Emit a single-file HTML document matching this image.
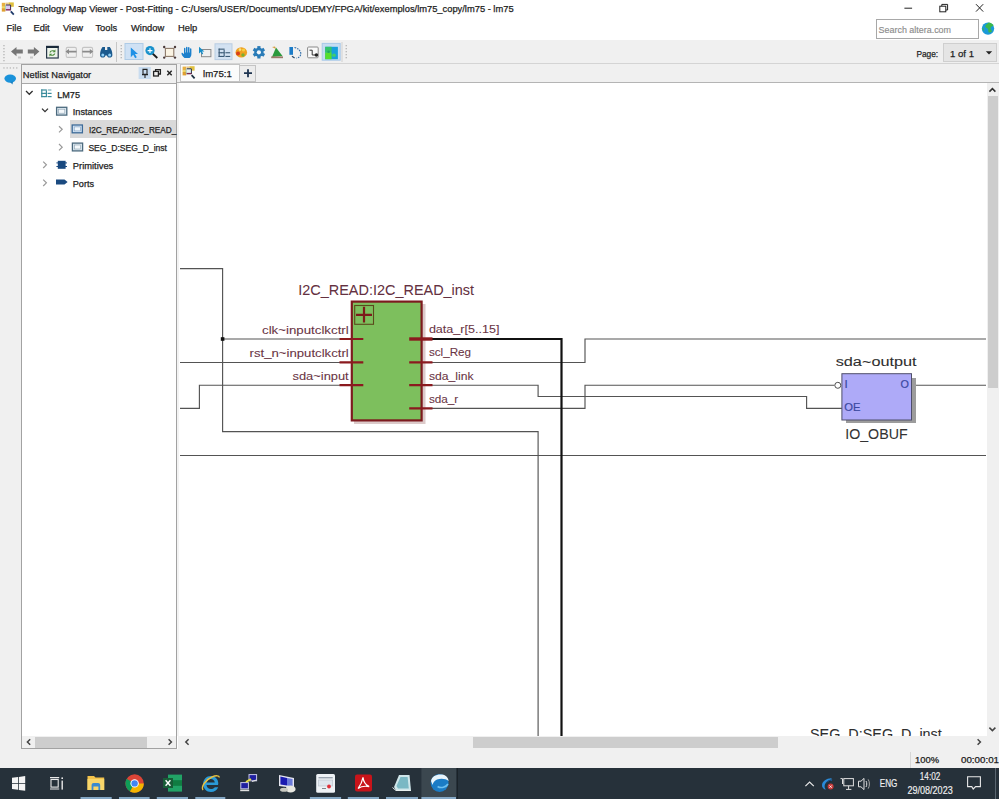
<!DOCTYPE html>
<html><head><meta charset="utf-8">
<style>
*{box-sizing:border-box}
html,body{margin:0;padding:0}
body{width:999px;height:799px;overflow:hidden;position:relative;background:#fff;font-family:"Liberation Sans",sans-serif;color:#000}
.a{position:absolute}
.t{position:absolute;white-space:pre;line-height:1;-webkit-text-stroke:0.25px currentColor}
svg{position:absolute;left:0;top:0}
</style></head><body>
<div class="a" style="left:0;top:0;width:999px;height:40px;background:#fff"></div>
<div class="a" style="left:178px;top:83px;width:809px;height:653px;background:#fff"></div>
<svg width="999" height="799" viewBox="0 0 999 799">
<g fill="none" stroke="#545454" stroke-width="1.15">
<path d="M180 268.6H222.6V431.6H538.1V736"/>
<path d="M222.6 339H341"/>
<path d="M180 362.5H341"/>
<path d="M180 408.3H199.4V385.2H341"/>
<path d="M432 362.5H585V339H986"/>
<path d="M432 385.2H538.1V396.5H806.6V408.3H842"/>
<path d="M432 408.3H585V385.2H834.5"/>
<path d="M912 385.2H986"/>
<path d="M180 455.5H986"/>
</g>
<path d="M432 339H561.5V736" fill="none" stroke="#111" stroke-width="2.2"/>
<rect x="220.8" y="337.2" width="3.6" height="3.6" fill="#111"/>
<rect x="354" y="304" width="71.5" height="120" fill="#dccaca"/>
<rect x="351.8" y="301.6" width="69.8" height="118.8" fill="#7dbf5d" stroke="#7d1a1f" stroke-width="2.2"/>
<rect x="354.7" y="305.5" width="18.8" height="18.8" fill="none" stroke="#5b4a1c" stroke-width="1.1"/>
<path d="M356 314.9H372M364 306.8V322.6" stroke="#7d1a1a" stroke-width="2.2"/>
<g stroke="#8b1a1f" stroke-width="2.2">
<path d="M339.5 339H363.3M339.5 362.3H363.3M339.5 385.2H363.3"/>
<path d="M409.2 362.3H432.5M409.2 385.2H432.5M409.2 408.3H432.5"/>
</g>
<path d="M409.2 339H432.5" stroke="#8b1a1f" stroke-width="3.4"/>
<rect x="846" y="378" width="70" height="45" fill="#9c9c9c"/>
<rect x="841.9" y="373.7" width="69.6" height="46.3" fill="#aeaaf8" stroke="#4f4f6a" stroke-width="1"/>
<circle cx="837.8" cy="385.3" r="3" fill="#fff" stroke="#505050" stroke-width="1"/>
</svg>
<svg class="a" width="999" height="799" style="left:0;top:0"><text x="298.30" y="294.80" font-family="Liberation Sans" font-size="15.36" font-weight="normal" fill="#643040" stroke="#643040" stroke-width="0.05" textLength="175.80" lengthAdjust="spacingAndGlyphs" style="white-space:pre">I2C_READ:I2C_READ_inst</text></svg>
<svg class="a" width="999" height="799" style="left:0;top:0"><text x="262.00" y="333.50" font-family="Liberation Sans" font-size="11.80" font-weight="normal" fill="#6a3444" stroke="#6a3444" stroke-width="0.08" textLength="86.70" lengthAdjust="spacingAndGlyphs" style="white-space:pre">clk~inputclkctrl</text></svg>
<svg class="a" width="999" height="799" style="left:0;top:0"><text x="249.60" y="356.60" font-family="Liberation Sans" font-size="11.80" font-weight="normal" fill="#6a3444" stroke="#6a3444" stroke-width="0.08" textLength="99.10" lengthAdjust="spacingAndGlyphs" style="white-space:pre">rst_n~inputclkctrl</text></svg>
<svg class="a" width="999" height="799" style="left:0;top:0"><text x="292.50" y="380.00" font-family="Liberation Sans" font-size="11.80" font-weight="normal" fill="#6a3444" stroke="#6a3444" stroke-width="0.08" textLength="56.20" lengthAdjust="spacingAndGlyphs" style="white-space:pre">sda~input</text></svg>
<svg class="a" width="999" height="799" style="left:0;top:0"><text x="428.90" y="333.30" font-family="Liberation Sans" font-size="11.80" font-weight="normal" fill="#6a3444" stroke="#6a3444" stroke-width="0.08" textLength="70.50" lengthAdjust="spacingAndGlyphs" style="white-space:pre">data_r[5..15]</text></svg>
<svg class="a" width="999" height="799" style="left:0;top:0"><text x="428.90" y="356.30" font-family="Liberation Sans" font-size="11.80" font-weight="normal" fill="#6a3444" stroke="#6a3444" stroke-width="0.08" textLength="42.20" lengthAdjust="spacingAndGlyphs" style="white-space:pre">scl_Reg</text></svg>
<svg class="a" width="999" height="799" style="left:0;top:0"><text x="428.90" y="380.40" font-family="Liberation Sans" font-size="11.80" font-weight="normal" fill="#6a3444" stroke="#6a3444" stroke-width="0.08" textLength="44.60" lengthAdjust="spacingAndGlyphs" style="white-space:pre">sda_link</text></svg>
<svg class="a" width="999" height="799" style="left:0;top:0"><text x="428.90" y="403.20" font-family="Liberation Sans" font-size="11.80" font-weight="normal" fill="#6a3444" stroke="#6a3444" stroke-width="0.08" textLength="29.40" lengthAdjust="spacingAndGlyphs" style="white-space:pre">sda_r</text></svg>
<svg class="a" width="999" height="799" style="left:0;top:0"><text x="835.70" y="366.00" font-family="Liberation Sans" font-size="12.62" font-weight="normal" fill="#2e2e2e" stroke="#2e2e2e" stroke-width="0.08" textLength="80.90" lengthAdjust="spacingAndGlyphs" style="white-space:pre">sda~output</text></svg>
<svg class="a" width="999" height="799" style="left:0;top:0"><text x="845.20" y="438.60" font-family="Liberation Sans" font-size="14.68" font-weight="normal" fill="#333" stroke="#333" stroke-width="0.08" textLength="62.40" lengthAdjust="spacingAndGlyphs" style="white-space:pre">IO_OBUF</text></svg>
<svg class="a" width="999" height="799" style="left:0;top:0"><text x="844.40" y="387.60" font-family="Liberation Sans" font-size="11.60" font-weight="normal" fill="#3a48a0" stroke="#3a48a0" stroke-width="0.2" style="white-space:pre">I</text></svg>
<svg class="a" width="999" height="799" style="left:0;top:0"><text x="900.60" y="387.60" font-family="Liberation Sans" font-size="11.60" font-weight="normal" fill="#3a48a0" stroke="#3a48a0" stroke-width="0.2" textLength="8.40" lengthAdjust="spacingAndGlyphs" style="white-space:pre">O</text></svg>
<svg class="a" width="999" height="799" style="left:0;top:0"><text x="844.20" y="410.80" font-family="Liberation Sans" font-size="11.60" font-weight="normal" fill="#3a48a0" stroke="#3a48a0" stroke-width="0.2" textLength="16.20" lengthAdjust="spacingAndGlyphs" style="white-space:pre">OE</text></svg>
<svg class="a" width="999" height="799" style="left:0;top:0"><text x="810.00" y="738.50" font-family="Liberation Sans" font-size="15.50" font-weight="normal" fill="#2e2e2e" stroke="#2e2e2e" stroke-width="0.08" textLength="131.80" lengthAdjust="spacingAndGlyphs" style="white-space:pre">SEG_D:SEG_D_inst</text></svg>
<div class="a" style="left:0;top:40px;width:999px;height:23px;background:#f0f0f0"></div>
<div class="a" style="left:0;top:63px;width:999px;height:1px;background:#d4d4d4"></div>
<div class="a" style="left:0;top:64px;width:21px;height:704px;background:#f0f0f0"></div>
<div class="a" style="left:21px;top:64px;width:156px;height:685px;background:#fff;border:1px solid #a2a2a2"></div>
<div class="a" style="left:22px;top:65px;width:154px;height:19px;background:#f0f0f0;border-bottom:1px solid #a8a8a8"></div>
<div class="a" style="left:177px;top:64px;width:822px;height:19px;background:#f0f0f0;border-bottom:1px solid #b4b4b4"></div>
<div class="a" style="left:177px;top:83px;width:2px;height:653px;background:#f3f3f3"></div>
<div class="a" style="left:180px;top:64px;width:60px;height:18px;background:#fbfbfb;border:1px solid #c4c4c4"></div>
<div class="a" style="left:239px;top:65px;width:17px;height:17px;background:#ececec;border:1px solid #c4c4c4"></div>
<div class="a" style="left:987px;top:83px;width:12px;height:653px;background:#f0f0f0"></div>
<div class="a" style="left:988px;top:96px;width:10px;height:292px;background:#cdcdcd"></div>
<div class="a" style="left:178px;top:736px;width:821px;height:13px;background:#f0f0f0"></div>
<div class="a" style="left:473px;top:737px;width:305px;height:11px;background:#cdcdcd"></div>
<div class="a" style="left:22px;top:736px;width:154px;height:12px;background:#f0f0f0"></div>
<div class="a" style="left:35px;top:737px;width:112px;height:11px;background:#cdcdcd"></div>
<div class="a" style="left:0;top:749px;width:999px;height:19px;background:#f0f0f0"></div>
<div class="a" style="left:910px;top:752px;width:1px;height:16px;background:#d6d6d6"></div>
<div class="a" style="left:0;top:768px;width:999px;height:31px;background:#26313a"></div>
<div class="a" style="left:876px;top:19px;width:103px;height:20px;border:1px solid #a8a8a8;background:#fff"></div>
<div class="a" style="left:943px;top:43px;width:54px;height:19px;background:#e5e5e5;border:1px solid #cfcfcf"></div>
<svg width="999" height="799" viewBox="0 0 999 799">
<g fill="#b4b4b4">
<rect x="3.3" y="45" width="1.3" height="1.3"/><rect x="3.3" y="48" width="1.3" height="1.3"/><rect x="3.3" y="51" width="1.3" height="1.3"/><rect x="3.3" y="54" width="1.3" height="1.3"/><rect x="3.3" y="57" width="1.3" height="1.3"/><rect x="3.3" y="60" width="1.3" height="1.3"/>
<rect x="120.6" y="45" width="1.3" height="1.3"/><rect x="120.6" y="48" width="1.3" height="1.3"/><rect x="120.6" y="51" width="1.3" height="1.3"/><rect x="120.6" y="54" width="1.3" height="1.3"/><rect x="120.6" y="57" width="1.3" height="1.3"/>
<rect x="345.6" y="45" width="1.3" height="1.3"/><rect x="345.6" y="48" width="1.3" height="1.3"/><rect x="345.6" y="51" width="1.3" height="1.3"/><rect x="345.6" y="54" width="1.3" height="1.3"/><rect x="345.6" y="57" width="1.3" height="1.3"/>
</g>
<rect x="116" y="42" width="1" height="20" fill="#c6c6c6"/>
<rect x="341.5" y="42" width="1" height="20" fill="#d0d0d0"/>
<!-- back / forward -->
<path d="M11 51.5L16.5 47V49.6H22.8V53.6H16.5V56.2Z" fill="#767676"/>
<path d="M39.4 51.5L33.9 47V49.6H27.8V53.6H33.9V56.2Z" fill="#767676"/>
<rect x="18" y="56.5" width="3" height="2" fill="#c8c8c8"/><rect x="30" y="56.5" width="3" height="2" fill="#c8c8c8"/>
<!-- refresh window -->
<rect x="46.6" y="46.4" width="11.6" height="11.6" fill="#eef4ec" stroke="#28384a" stroke-width="1.2"/>
<rect x="46.2" y="46" width="12.4" height="2" fill="#1a2a3a"/>
<path d="M49.5 52.5C50 50.3 52.5 49.6 54.3 50.6L55.4 49.6V52.3H52.7L53.6 51.5C52.3 51 51 51.6 50.7 52.5Z M55.3 53.5C54.8 55.6 52.3 56.4 50.5 55.4L49.4 56.4V53.7H52.1L51.2 54.5C52.5 55.1 53.8 54.4 54.1 53.5Z" fill="#4a8a3a"/>
<!-- back/fwd in box -->
<rect x="66.2" y="47.4" width="10.2" height="10" rx="1.5" fill="none" stroke="#c4c4c4" stroke-width="1.1"/>
<path d="M65.5 51.6L69 49V50.8H76.5V52.4H69V54.2Z" fill="#8a8a8a"/>
<rect x="82.4" y="47.4" width="10.2" height="10" rx="1.5" fill="none" stroke="#c4c4c4" stroke-width="1.1"/>
<path d="M93.3 51.6L89.8 49V50.8H82.3V52.4H89.8V54.2Z" fill="#8a8a8a"/>
<!-- binoculars -->
<path d="M100 55C100 51 101.5 48.5 102.5 47H105V50H107.3V47H109.8C110.8 48.5 112.4 51 112.4 55C112.4 57 111 57.6 109.6 57.6C108 57.6 107.2 56.6 107 55.5H105.4C105.2 56.6 104.4 57.6 102.8 57.6C101.4 57.6 100 57 100 55Z" fill="#1b5a8e"/>
<circle cx="102.8" cy="55" r="1.5" fill="#8fd0f8"/><circle cx="109.6" cy="55" r="1.5" fill="#8fd0f8"/>
<!-- selected pointer -->
<rect x="125" y="43.5" width="18" height="16" fill="#cfe1f4" stroke="#aecbe6" stroke-width="1"/>
<path d="M130.8 47.4V57.2L133.2 54.8L135.2 58.2L136.8 57.3L134.9 54H138Z" fill="#1e90e6"/>
<!-- zoom -->
<path d="M152.5 53.5L157.3 58" stroke="#1a1a1a" stroke-width="1.8"/>
<circle cx="150" cy="50.6" r="4.6" fill="#1a92cc"/>
<path d="M147.6 50.6H152.4M150 48.2V53" stroke="#fff" stroke-width="1.1"/>
<!-- fit -->
<rect x="165.4" y="48.4" width="8.4" height="8" fill="#fbf4e4" stroke="#8c7868" stroke-width="1.1"/>
<g fill="#4a3a3a"><circle cx="164.2" cy="47" r="1.2"/><circle cx="175" cy="47" r="1.2"/><circle cx="164.2" cy="57.6" r="1.2"/><circle cx="175" cy="57.6" r="1.2"/></g>
<!-- hand -->
<path d="M184.5 58C182.6 56.4 181.3 54.4 181.5 53.2C181.8 52.4 182.7 52.6 183.3 53.4L184 54.2V48.6C184 47.6 185.4 47.6 185.4 48.6V52.4H186V47.4C186 46.4 187.5 46.4 187.5 47.4V52.4H188V47.8C188 46.8 189.5 46.8 189.5 47.8V52.6H190V49C190 48 191.4 48 191.4 49V54C191.4 56 190.4 57.4 189.5 58Z" fill="#1c80cc"/>
<!-- select region -->
<rect x="201.5" y="49.5" width="9.4" height="7.2" fill="none" stroke="#8a8a8a" stroke-width="1"/>
<path d="M199 46.8V53.6L200.7 52L202 54.4L203.2 53.8L202 51.4H204.4Z" fill="#1a8ec8"/>
<!-- hierarchy selected -->
<rect x="215" y="43.8" width="17" height="15.8" fill="#d3e2f2" stroke="#b8cde2" stroke-width="1"/>
<g fill="#3b5a76">
<rect x="218.6" y="48.6" width="1.1" height="8.4"/><rect x="218.6" y="48.6" width="6" height="1.1"/><rect x="218.6" y="52.2" width="3.4" height="1.1"/><rect x="218.6" y="55.9" width="3.4" height="1.1"/>
<rect x="223.6" y="49.8" width="1.1" height="6.2"/><rect x="225.4" y="52.2" width="4.8" height="1.1"/><rect x="225.4" y="55.9" width="4.8" height="1.1"/><rect x="221.5" y="52.2" width="3" height="1.1"/><rect x="221.5" y="55.9" width="3" height="1.1"/>
</g>
<!-- palette -->
<ellipse cx="241.3" cy="52.4" rx="5.8" ry="5.2" fill="#f0a020"/>
<circle cx="238" cy="53.6" r="2" fill="#d8401a"/><circle cx="243.5" cy="50" r="1.6" fill="#f6d040"/><circle cx="243" cy="55" r="1.7" fill="#7ab030"/><circle cx="240" cy="49.6" r="1.3" fill="#f8e080"/>
<!-- gear -->
<g transform="translate(258.9 52.3)">
<circle r="4.6" fill="#2a7cb8"/>
<g fill="#2a7cb8"><rect x="-1.6" y="-6.2" width="3.2" height="12.4"/><rect x="-1.6" y="-6.2" width="3.2" height="12.4" transform="rotate(60)"/><rect x="-1.6" y="-6.2" width="3.2" height="12.4" transform="rotate(120)"/></g>
<circle r="2.1" fill="#f4f8fc"/>
</g>
<!-- green triangle -->
<path d="M272 57L276 47.5L282.5 56Z" fill="#2c9a3c"/>
<path d="M272 47L275 46.5L276 49Z" fill="#d8a040"/>
<rect x="271.2" y="56.4" width="11.8" height="1.8" fill="#9a7a6a"/>
<!-- blue figure -->
<rect x="289.4" y="47" width="3.6" height="7.8" fill="#1c7cc8"/>
<path d="M294.5 47.5C298.5 48.5 300.8 51 300.8 53.8C300.8 56 299 57.6 296.5 58.2" fill="none" stroke="#2a6aa8" stroke-width="1.2" stroke-dasharray="1.6 1"/>
<path d="M292 56.2L294.6 58" stroke="#2a4a6a" stroke-width="1.2"/>
<!-- box with arrow -->
<rect x="307.6" y="47" width="10.6" height="10.8" rx="1" fill="#fafafa" stroke="#8a8a8a" stroke-width="1"/>
<path d="M309.5 50.2H312.2V55H315" fill="none" stroke="#333" stroke-width="1"/>
<circle cx="316.4" cy="55" r="1.8" fill="#222"/>
<!-- grid selected -->
<rect x="322.2" y="43.4" width="18" height="16.8" fill="#c6ddf2" stroke="#a9c9e8" stroke-width="1"/>
<rect x="325.2" y="46.8" width="12.7" height="12.4" fill="#18a0dc"/>
<rect x="325.2" y="46.8" width="6.4" height="5.6" fill="#34c46a"/>
<rect x="325.2" y="52.4" width="6.4" height="6.8" fill="#56de2e"/>
<circle cx="334" cy="55.2" r="1.8" fill="#40cc70"/>
<circle cx="328.6" cy="51.8" r="1.3" fill="#20a860"/>
</svg>
<svg class="a" width="999" height="799" style="left:0;top:0"><text x="18.60" y="12.00" font-family="Liberation Sans" font-size="9.88" font-weight="normal" fill="#1e1e1e" stroke="#1e1e1e" stroke-width="0.25" textLength="495.00" lengthAdjust="spacingAndGlyphs" style="white-space:pre">Technology Map Viewer - Post-Fitting - C:/Users/USER/Documents/UDEMY/FPGA/kit/exemplos/lm75_copy/lm75 - lm75</text></svg>
<svg class="a" width="999" height="799" style="left:0;top:0"><text x="6.60" y="31.00" font-family="Liberation Sans" font-size="9.33" font-weight="normal" fill="#1e1e1e" stroke="#1e1e1e" stroke-width="0.25" style="white-space:pre">File</text></svg>
<svg class="a" width="999" height="799" style="left:0;top:0"><text x="33.60" y="31.00" font-family="Liberation Sans" font-size="9.33" font-weight="normal" fill="#1e1e1e" stroke="#1e1e1e" stroke-width="0.25" style="white-space:pre">Edit</text></svg>
<svg class="a" width="999" height="799" style="left:0;top:0"><text x="63.00" y="31.00" font-family="Liberation Sans" font-size="9.33" font-weight="normal" fill="#1e1e1e" stroke="#1e1e1e" stroke-width="0.25" style="white-space:pre">View</text></svg>
<svg class="a" width="999" height="799" style="left:0;top:0"><text x="95.40" y="31.00" font-family="Liberation Sans" font-size="9.33" font-weight="normal" fill="#1e1e1e" stroke="#1e1e1e" stroke-width="0.25" style="white-space:pre">Tools</text></svg>
<svg class="a" width="999" height="799" style="left:0;top:0"><text x="131.00" y="31.00" font-family="Liberation Sans" font-size="9.33" font-weight="normal" fill="#1e1e1e" stroke="#1e1e1e" stroke-width="0.25" style="white-space:pre">Window</text></svg>
<svg class="a" width="999" height="799" style="left:0;top:0"><text x="178.00" y="31.00" font-family="Liberation Sans" font-size="9.33" font-weight="normal" fill="#1e1e1e" stroke="#1e1e1e" stroke-width="0.25" style="white-space:pre">Help</text></svg>
<svg class="a" width="999" height="799" style="left:0;top:0"><text x="878.60" y="33.40" font-family="Liberation Sans" font-size="9.05" font-weight="normal" fill="#8c8c8c" stroke="#8c8c8c" stroke-width="0.15" textLength="72.40" lengthAdjust="spacingAndGlyphs" style="white-space:pre">Search altera.com</text></svg>
<svg class="a" width="999" height="799" style="left:0;top:0"><text x="916.40" y="56.70" font-family="Liberation Sans" font-size="9.60" font-weight="normal" fill="#1e1e1e" stroke="#1e1e1e" stroke-width="0.25" textLength="21.80" lengthAdjust="spacingAndGlyphs" style="white-space:pre">Page:</text></svg>
<svg class="a" width="999" height="799" style="left:0;top:0"><text x="950.00" y="56.70" font-family="Liberation Sans" font-size="9.60" font-weight="normal" fill="#1e1e1e" stroke="#1e1e1e" stroke-width="0.25" style="white-space:pre">1 of 1</text></svg>
<svg class="a" width="999" height="799" style="left:0;top:0"><text x="22.80" y="78.00" font-family="Liberation Sans" font-size="9.33" font-weight="normal" fill="#1e1e1e" stroke="#1e1e1e" stroke-width="0.25" style="white-space:pre">Netlist Navigator</text></svg>
<svg class="a" width="999" height="799" style="left:0;top:0"><text x="203.00" y="77.00" font-family="Liberation Sans" font-size="9.05" font-weight="normal" fill="#1e1e1e" stroke="#1e1e1e" stroke-width="0.25" textLength="28.80" lengthAdjust="spacingAndGlyphs" style="white-space:pre">lm75:1</text></svg>
<svg class="a" width="999" height="799" style="left:0;top:0"><text x="915.00" y="762.60" font-family="Liberation Sans" font-size="8.64" font-weight="normal" fill="#1e1e1e" stroke="#1e1e1e" stroke-width="0.25" textLength="24.00" lengthAdjust="spacingAndGlyphs" style="white-space:pre">100%</text></svg>
<svg class="a" width="999" height="799" style="left:0;top:0"><text x="961.00" y="762.60" font-family="Liberation Sans" font-size="8.64" font-weight="normal" fill="#1e1e1e" stroke="#1e1e1e" stroke-width="0.25" textLength="38.00" lengthAdjust="spacingAndGlyphs" style="white-space:pre">00:00:01</text></svg>
<div class="a" style="left:70px;top:120px;width:106px;height:17.5px;background:#d9d9d9"></div>
<svg width="999" height="799" viewBox="0 0 999 799">
<g fill="none" stroke="#303030" stroke-width="1.3">
<path d="M26 91L29.3 94.3L32.6 91"/>
<path d="M42 108.6L45 111.6L48 108.6"/>
</g>
<g fill="none" stroke="#9a9a9a" stroke-width="1.2">
<path d="M59 126.2L62.2 129.3L59 132.4"/>
<path d="M59 144L62.2 147.2L59 150.4"/>
<path d="M43.2 161.6L46.4 164.8L43.2 168"/>
<path d="M43.2 179.6L46.4 182.8L43.2 186"/>
</g>
<!-- LM75 icon -->
<g fill="#3a8c9c">
<rect x="41.2" y="89.4" width="1.2" height="7.8"/><rect x="41.2" y="89.4" width="5.6" height="1.2"/><rect x="41.2" y="92.8" width="3.2" height="1.2"/><rect x="41.2" y="96" width="3.2" height="1.2"/>
<rect x="45.8" y="90.4" width="1.2" height="5.8"/><rect x="47.6" y="92.8" width="4" height="1.2"/><rect x="47.6" y="96" width="4" height="1.2"/><rect x="44" y="92.8" width="3" height="1.2"/><rect x="44" y="96" width="3" height="1.2"/>
<rect x="47.8" y="89.4" width="3.6" height="1.2" fill="#7ab0bc"/>
</g>
<!-- instance icons -->
<rect x="56.6" y="107.3" width="10.2" height="7.8" fill="#dde8f0" stroke="#4c6a7e" stroke-width="1.3"/>
<rect x="58.6" y="109.2" width="6.2" height="4" fill="#f4f8fb" stroke="#8aa0b0" stroke-width="0.6"/>
<rect x="72.2" y="125" width="10.2" height="7.8" fill="#d4e4f2" stroke="#3c6a98" stroke-width="1.3"/>
<rect x="74.2" y="126.9" width="6.2" height="4" fill="#eef5fb" stroke="#7a9cc0" stroke-width="0.6"/>
<rect x="72.4" y="143.1" width="10.2" height="7.8" fill="#dde8f0" stroke="#4c6a7e" stroke-width="1.3"/>
<rect x="74.4" y="145" width="6.2" height="4" fill="#f4f8fb" stroke="#8aa0b0" stroke-width="0.6"/>
<!-- primitives -->
<rect x="57.8" y="160.8" width="7.8" height="8" fill="#1a4a80"/>
<g fill="#1a4a80"><rect x="56.4" y="162.4" width="10.6" height="1"/><rect x="56.4" y="166" width="10.6" height="1"/></g>
<!-- ports -->
<path d="M56 179.5H64.5L67.6 182L64.5 184.6H56Z" fill="#1a4a80"/>
</svg>
<svg class="a" width="999" height="799" style="left:0;top:0"><text x="57.20" y="97.60" font-family="Liberation Sans" font-size="8.78" font-weight="normal" fill="#1e1e1e" stroke="#1e1e1e" stroke-width="0.25" textLength="22.80" lengthAdjust="spacingAndGlyphs" style="white-space:pre">LM75</text></svg>
<svg class="a" width="999" height="799" style="left:0;top:0"><text x="72.80" y="115.00" font-family="Liberation Sans" font-size="8.78" font-weight="normal" fill="#1e1e1e" stroke="#1e1e1e" stroke-width="0.25" textLength="39.20" lengthAdjust="spacingAndGlyphs" style="white-space:pre">Instances</text></svg>
<svg class="a" width="999" height="799" style="left:0;top:0"><text x="88.90" y="133.20" font-family="Liberation Sans" font-size="8.78" font-weight="normal" fill="#1e1e1e" stroke="#1e1e1e" stroke-width="0.25" textLength="87.50" lengthAdjust="spacingAndGlyphs" style="white-space:pre">I2C_READ:I2C_READ_</text></svg>
<svg class="a" width="999" height="799" style="left:0;top:0"><text x="88.40" y="151.40" font-family="Liberation Sans" font-size="8.78" font-weight="normal" fill="#1e1e1e" stroke="#1e1e1e" stroke-width="0.25" textLength="78.60" lengthAdjust="spacingAndGlyphs" style="white-space:pre">SEG_D:SEG_D_inst</text></svg>
<svg class="a" width="999" height="799" style="left:0;top:0"><text x="72.80" y="169.00" font-family="Liberation Sans" font-size="8.78" font-weight="normal" fill="#1e1e1e" stroke="#1e1e1e" stroke-width="0.25" textLength="40.50" lengthAdjust="spacingAndGlyphs" style="white-space:pre">Primitives</text></svg>
<svg class="a" width="999" height="799" style="left:0;top:0"><text x="72.80" y="186.60" font-family="Liberation Sans" font-size="8.78" font-weight="normal" fill="#1e1e1e" stroke="#1e1e1e" stroke-width="0.25" textLength="21.20" lengthAdjust="spacingAndGlyphs" style="white-space:pre">Ports</text></svg>
<svg width="999" height="799" viewBox="0 0 999 799">
<!-- title icon -->
<g transform="translate(-180.8 -63.8)">
<rect x="182.6" y="66.6" width="3.6" height="4" fill="#e8b040"/><rect x="182.6" y="70.4" width="3.4" height="1.8" fill="#f0d860"/><rect x="182.6" y="72" width="3.6" height="3.4" fill="#e0a030"/>
<rect x="186.4" y="66.4" width="3" height="2.2" fill="#e8c890"/><rect x="189.4" y="66.2" width="5.2" height="4.4" fill="#e0c040"/>
<rect x="186.8" y="68.6" width="5" height="5.6" fill="#d8c8f4"/>
<path d="M186.8 68.8H191.4V74" fill="none" stroke="#3a2a4a" stroke-width="1"/>
<path d="M186.4 73.6H191.6" stroke="#8a2a5a" stroke-width="1.4"/>
<path d="M186.2 68.6V74" stroke="#8ac8b0" stroke-width="0.8"/>
<path d="M191.6 75.2L194.6 78.4" stroke="#1e3a6a" stroke-width="1.8"/>
</g>
<!-- window controls -->
<path d="M904.4 8.2H912.1" stroke="#222" stroke-width="1"/>
<rect x="939.8" y="6.2" width="6" height="5.6" fill="none" stroke="#222" stroke-width="1"/>
<path d="M941.8 6.2V4.4H947.6V10H945.8" fill="none" stroke="#222" stroke-width="1"/>
<path d="M976 4.2L983.2 11.6M983.2 4.2L976 11.6" stroke="#222" stroke-width="1"/>
<!-- globe -->
<circle cx="988" cy="28.6" r="6.2" fill="#1a9ad8"/>
<path d="M988.6 22.6C990.8 22.8 992.8 24 993.6 25.6C992.4 26.2 991.2 26.6 990.6 27.8C990.2 29 991.4 30.4 992.2 31.2C991 32.4 989.6 33 988.6 32.2C988 31 988.6 29.6 987.6 28.6C986.6 27.8 985.2 27.4 985.4 26C985.8 24.6 987.4 24.4 988.6 22.6Z" fill="#3cb84a"/><path d="M982.6 27.4C983.6 28 984.4 29.4 984 30.8L982.8 30Z" fill="#3cb84a"/>
<!-- dropdown triangle -->
<path d="M985.8 51.2H992.2L989 54.6Z" fill="#222"/>
<!-- chat bubble / grip -->
<g fill="#b8b8b8"><rect x="3.3" y="67.3" width="1.3" height="1.3"/><rect x="6.5" y="67.3" width="1.3" height="1.3"/><rect x="9.7" y="67.3" width="1.3" height="1.3"/><rect x="12.9" y="67.3" width="1.3" height="1.3"/><rect x="16.1" y="67.3" width="1.3" height="1.3"/></g>
<ellipse cx="10.2" cy="78.6" rx="5.8" ry="4.1" fill="#1a92da"/>
<path d="M10 82L12.5 84.6L13 81.5Z" fill="#1a80c0"/>
<!-- panel header buttons -->
<rect x="138.6" y="67" width="12.2" height="12" fill="#c9dcef"/>
<path d="M143 69.4H147V74.4H143Z" fill="none" stroke="#222" stroke-width="1.1"/>
<path d="M142 74.6H148M145 74.6V78" stroke="#222" stroke-width="1.1"/>
<rect x="153.6" y="71.4" width="4.8" height="4.6" fill="none" stroke="#222" stroke-width="1.3"/>
<path d="M155.6 71.4V69.6H160.4V74H158.4" fill="none" stroke="#222" stroke-width="1.3"/>
<path d="M167.3 70.8L171.7 75.2M171.7 70.8L167.3 75.2" stroke="#222" stroke-width="1.4"/>
<!-- tab icon -->
<rect x="182.6" y="66.6" width="3.6" height="4" fill="#e8b040"/><rect x="182.6" y="70.4" width="3.4" height="1.8" fill="#f0d860"/><rect x="182.6" y="72" width="3.6" height="3.4" fill="#e0a030"/>
<rect x="186.4" y="66.4" width="3" height="2.2" fill="#e8c890"/><rect x="189.4" y="66.2" width="5.2" height="4.4" fill="#e0c040"/>
<rect x="186.8" y="68.6" width="5" height="5.6" fill="#e4f2f6"/>
<path d="M186.8 68.8H191.4V74" fill="none" stroke="#2a3040" stroke-width="1"/>
<path d="M186.4 73.6H191.6" stroke="#7a2a50" stroke-width="1.4"/>
<path d="M186.2 68.6V74" stroke="#8ab8b0" stroke-width="0.8"/>
<path d="M191.6 75.2L194.6 78.4" stroke="#1e3040" stroke-width="1.8"/>
<!-- plus -->
<path d="M244 73.2H252M248 69.2V77.2" stroke="#1e3450" stroke-width="1.8"/>
<!-- scrollbar arrows -->
<path d="M989.4 91.6L992.4 88.6L995.4 91.6" fill="none" stroke="#333" stroke-width="1.5"/>
<path d="M989.4 727.6L992.4 730.6L995.4 727.6" fill="none" stroke="#444" stroke-width="1.5"/>
<path d="M188.6 739.2L185.8 742L188.6 744.8" fill="none" stroke="#444" stroke-width="1.5"/>
<path d="M977.6 739.2L980.4 742L977.6 744.8" fill="none" stroke="#444" stroke-width="1.5"/>
<path d="M30.2 739.2L27.4 742L30.2 744.8" fill="none" stroke="#444" stroke-width="1.5"/>
<path d="M168.6 739.2L171.4 742L168.6 744.8" fill="none" stroke="#444" stroke-width="1.5"/>
</svg>
<svg width="999" height="799" viewBox="0 0 999 799">
<rect x="421.4" y="768" width="34.6" height="31" fill="#3b474f"/>
<g fill="#8fb4d4" opacity="0.9">
<rect x="80.5" y="797" width="31.2" height="2"/>
<rect x="119" y="797" width="30.6" height="2"/>
<rect x="156.8" y="797" width="31.2" height="2"/>
<rect x="195.3" y="797" width="30" height="2"/>
<rect x="309.9" y="797" width="31.2" height="2"/>
<rect x="347.8" y="797" width="31.2" height="2"/>
<rect x="386" y="797" width="32" height="2"/>
<rect x="421.4" y="797" width="34.6" height="2"/>
</g>
<!-- windows logo -->
<g fill="#f4f4f4">
<path d="M12 777.8L18 777V783H12Z"/><path d="M18.8 776.9L25.2 776V783H18.8Z"/>
<path d="M12 783.8H18V789.8L12 789Z"/><path d="M18.8 783.8H25.2V790.8L18.8 789.9Z"/>
</g>
<!-- task view -->
<g fill="none" stroke="#e8e8e8" stroke-width="1.1">
<rect x="51" y="779.5" width="7.2" height="7.6"/>
<path d="M50 777.6H59.2M50 789H59.2"/>
</g>
<rect x="61.4" y="777.4" width="1.6" height="1.6" fill="#e8e8e8"/><rect x="61.5" y="780.6" width="1.4" height="9" fill="#e8e8e8"/>
<!-- explorer -->
<path d="M87.5 776H94L95.5 777.6H104.2V790H87.5Z" fill="#f2c24a"/>
<rect x="87.5" y="779" width="16.7" height="11" fill="#f8d66a"/>
<path d="M91.6 790V785.2C91.6 783.8 92.5 783 93.6 783H98.2C99.3 783 100.2 783.8 100.2 785.2V790H98.4V786.6H93.4V790Z" fill="#3a8ad0"/>
<!-- chrome -->
<circle cx="134.6" cy="783.4" r="9.2" fill="#db4437"/>
<path d="M134.6 783.4L126.6 778.8A9.2 9.2 0 0 0 130 791.4Z" fill="#0f9d58"/>
<path d="M134.6 783.4H143.8A9.2 9.2 0 0 1 130 791.4Z" fill="#f4b400"/>
<circle cx="134.6" cy="783.4" r="4.2" fill="#fff"/>
<circle cx="134.6" cy="783.4" r="3.2" fill="#4285f4"/>
<!-- excel -->
<rect x="168" y="774.6" width="14" height="17" fill="#21a366"/>
<rect x="168" y="780.2" width="14" height="5.6" fill="#107c41"/>
<rect x="163" y="778" width="10" height="10" fill="#185c37"/>
<path d="M165.6 780.2L170.4 785.8M170.4 780.2L165.6 785.8" stroke="#fff" stroke-width="1.4"/>
<!-- IE -->
<path d="M218 785H206.5C206.8 787.5 208.6 789 211 789C212.7 789 214 788.3 214.8 787.2H218.2C217 790.3 214.3 792 211 792C206.4 792 203.2 788.6 203.2 784C203.2 779.4 206.4 776 211 776C215.4 776 218.3 779.2 218.3 783.6ZM206.6 782.4H214.8C214.5 780.3 213 779 210.8 779C208.6 779 207 780.3 206.6 782.4Z" fill="#2a9ad8"/>
<path d="M203 790C201 787 205 780 212 777C216 775.2 219.5 775.5 219 777.5" fill="none" stroke="#e8c040" stroke-width="1.4"/>
<!-- network -->
<rect x="249" y="774.6" width="7.6" height="6.2" fill="#2020a0" stroke="#c8c8e8" stroke-width="1"/>
<rect x="240.8" y="782.6" width="7.6" height="6.2" fill="#2020a0" stroke="#c8c8e8" stroke-width="1"/>
<rect x="240.2" y="789.6" width="9" height="1.6" fill="#e0e0e0"/>
<path d="M246 782L251 779" stroke="#e8e040" stroke-width="2"/>
<path d="M252 781.5L256.5 780" stroke="#e0e0e0" stroke-width="1.2"/>
<!-- monitor -->
<path d="M279 775L294 778V788L279 786Z" fill="#e6e6f0"/>
<path d="M280.4 776.6L287 777.9V785.6L280.4 784.6Z" fill="#1a1ab0"/>
<path d="M287 777.9L292.6 779V786.6L287 785.6Z" fill="#6a7ad8"/>
<ellipse cx="290.6" cy="789" rx="5" ry="3.6" fill="#e8e8e0"/>
<ellipse cx="284" cy="789.8" rx="4" ry="2" fill="#c8c8c0"/>
<!-- certificate -->
<rect x="316.2" y="774" width="18.8" height="18.8" rx="1.5" fill="#eef2f6"/>
<rect x="318.5" y="777" width="14.2" height="1.4" fill="#9aa4b0"/>
<rect x="318.5" y="780" width="14.2" height="6" fill="#dfe6ee" stroke="#b8c0c8" stroke-width="0.6"/>
<circle cx="329" cy="786.5" r="1.9" fill="#e0303a"/>
<rect x="322" y="788" width="4" height="1" fill="#808890"/>
<!-- acrobat -->
<rect x="355" y="774.5" width="17" height="17" rx="2" fill="#c8141a"/>
<path d="M358 788.6C360 786 362.4 781 363 777.4C363.4 781 365.6 785 369.2 786.6C366 786 361 786.4 358 788.6Z" fill="none" stroke="#fff" stroke-width="1.2"/>
<!-- notepad -->
<path d="M394 787L399 775H409.5L411 790.5H396Z" fill="#cfe6ea"/>
<path d="M396.5 786L400.5 777H407.6L408.8 788.6H398Z" fill="#7ab8c4"/>
<path d="M392.5 787.5L396 790.5H411" fill="none" stroke="#e8f0f0" stroke-width="1"/>
<!-- quartus -->
<circle cx="439.6" cy="783" r="9" fill="#1a7cc6"/>
<path d="M431 781C432 776 437 774 442 774.6C446 775.2 448.4 778 448.6 781C446 778.6 441 778 437 779.5C434.6 780.4 433 782.5 432.6 785Z" fill="#e8f4fb"/>
<path d="M437.6 786.5C441 788.6 446 787.4 448 784" fill="none" stroke="#6ec0f0" stroke-width="1.6"/>
<rect x="457" y="768" width="1" height="31" fill="#1a2228"/>
<!-- tray -->
<path d="M805.4 786.2L809.6 782L813.8 786.2" fill="none" stroke="#e8e8e8" stroke-width="1.2"/>
<path d="M831 778.2C826.6 778.4 822.4 781 822 785C821.8 787.4 823.6 789.4 826 789.6C824.6 788.2 824.2 786.2 825 784.2C826.2 781.2 829 779.6 832.4 779.2Z" fill="#2a8ad8"/><path d="M826.6 782.6C828 781 830 780.4 832 780.4" stroke="#1a5a9a" stroke-width="1"/>
<circle cx="830.6" cy="786.6" r="3" fill="#c83a3a"/>
<path d="M829.4 785.4L831.8 787.8M831.8 785.4L829.4 787.8" stroke="#fff" stroke-width="0.8"/>
<g fill="none" stroke="#e0e0e0" stroke-width="1">
<rect x="843.8" y="778.6" width="9.6" height="7.2"/>
<path d="M846 789.4H851.4M848.6 785.8V789.4"/>
<path d="M840.5 778.6H842.5V784"/>
</g>
<g fill="none" stroke="#e0e0e0" stroke-width="1">
<path d="M858.5 781.2H861L864 778.4V789.6L861 786.8H858.5Z"/>
<path d="M866 781C867 782.4 867 785.6 866 787"/>
<path d="M868.2 779.4C869.8 781.8 869.8 786.2 868.2 788.6" stroke="#a8a8a8"/>
</g>
<!-- notification -->
<path d="M967.6 776.8H980.4V786.6H975.6L973.2 789L971.8 786.6H967.6Z" fill="none" stroke="#e8e8e8" stroke-width="1.1"/>
<rect x="995" y="768" width="1" height="31" fill="#5a6670"/>
</svg>
<svg class="a" width="999" height="799" style="left:0;top:0"><text x="879.80" y="786.80" font-family="Liberation Sans" font-size="10.15" font-weight="normal" fill="#f0f0f0" stroke="#f0f0f0" stroke-width="0.15" textLength="17.60" lengthAdjust="spacingAndGlyphs" style="white-space:pre">ENG</text></svg>
<svg class="a" width="999" height="799" style="left:0;top:0"><text x="919.80" y="780.00" font-family="Liberation Sans" font-size="10.15" font-weight="normal" fill="#f0f0f0" stroke="#f0f0f0" stroke-width="0.15" textLength="20.60" lengthAdjust="spacingAndGlyphs" style="white-space:pre">14:02</text></svg>
<svg class="a" width="999" height="799" style="left:0;top:0"><text x="907.50" y="793.60" font-family="Liberation Sans" font-size="10.15" font-weight="normal" fill="#f0f0f0" stroke="#f0f0f0" stroke-width="0.15" textLength="45.20" lengthAdjust="spacingAndGlyphs" style="white-space:pre">29/08/2023</text></svg>
</body></html>
